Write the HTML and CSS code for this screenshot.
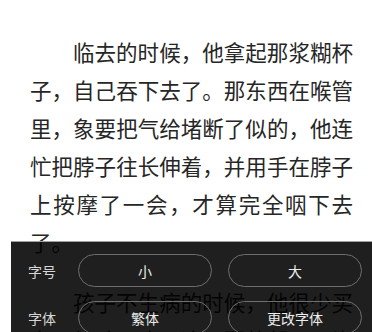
FILE: index.html
```html
<!DOCTYPE html>
<html lang="zh-CN">
<head>
<meta charset="utf-8">
<title>阅读</title>
<link rel="stylesheet" href="styles.css">
</head>
<body>
<div class="page">
  <article class="reader">
    <p class="para">临去的时候，他拿起那浆糊杯子，自己吞下去了。那东西在喉管里，象要把气给堵断了似的，他连忙把脖子往长伸着，并用手在脖子上按摩了一会，才算完全咽下去了。</p>
    <p class="para">孩子不生病的时候，他很少买东西给孩子吃，这一回他却买了许多点心回来。</p>
  </article>
  <div class="panel">
    <div class="row">
      <span class="label">字号</span>
      <div class="btns">
        <button class="btn">小</button>
        <button class="btn">大</button>
      </div>
    </div>
    <div class="row">
      <span class="label">字体</span>
      <div class="btns">
        <button class="btn">繁体</button>
        <button class="btn">更改字体</button>
      </div>
    </div>
  </div>
</div>
</body>
</html>
```
FILE: styles.css
```css
html, body {
  margin: 0;
  padding: 0;
  background: #ffffff;
}
.page {
  position: relative;
  width: 372px;
  height: 332px;
  overflow: hidden;
  font-family: "Noto Sans CJK SC", "Noto Sans", sans-serif;
}
.reader {
  width: 323px;
  padding: 33px 0 0 30px;
}
.para {
  margin: 0 0 22px 0;
  font-size: 21.5px;
  line-height: 38px;
  text-indent: 2em;
  text-align: justify;
  color: #262626;
}
.panel {
  position: absolute;
  left: 11px;
  right: 0;
  top: 241px;
  bottom: 0;
  background: rgba(0, 0, 0, 0.88);
  border-top: 1px solid #a0a0a0;
  padding: 12px 10px 0 17px;
  display: flex;
  flex-direction: column;
  gap: 14px;
}
.row {
  display: flex;
  align-items: center;
}
.label {
  width: 50px;
  font-size: 14px;
  color: #d6d6d6;
  flex: none;
}
.btns {
  display: flex;
  gap: 16px;
}
.btn {
  width: 134px;
  height: 33px;
  box-sizing: border-box;
  border: 1.5px solid #6e6e6e;
  border-radius: 17px;
  background: transparent;
  color: #ececec;
  font-family: "Noto Sans CJK SC", "Noto Sans", sans-serif;
  font-size: 14px;
  padding: 0;
}
```
